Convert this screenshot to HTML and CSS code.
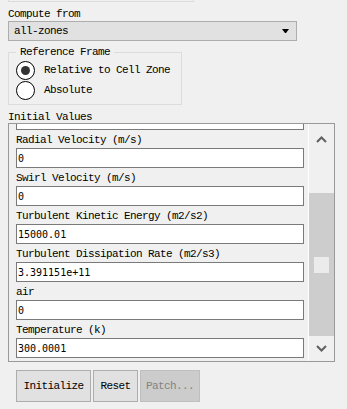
FILE: index.html
```html
<!DOCTYPE html>
<html lang="en">

<head>
  <meta charset="UTF-8">
  <meta name="viewport" content="width=device-width, initial-scale=1.0">
  <title>Initialization</title>
  <link rel="stylesheet" href="styles.css">
</head>

<body>

  <div class="panel">
    <div class="top-stub"></div>

    <label class="lbl compute-lbl" for="compute">Compute from</label>
    <div class="select" id="compute">
      <span>all-zones</span>
      <svg class="caret" width="8" height="5" viewBox="0 0 8 5"><polygon points="0,0 7,0 4,4 3,4" fill="#000"/></svg>
    </div>

    <fieldset class="group">
      <legend>Reference Frame</legend>
      <label class="radio"><span class="dot checked"></span>Relative to Cell Zone</label>
      <label class="radio"><span class="dot"></span>Absolute</label>
    </fieldset>

    <div class="lbl section-lbl">Initial Values</div>

    <div class="scroll-box">
      <div class="fields">
        <div class="stub"></div>

        <label class="field-lbl">Radial Velocity (m/s)</label>
        <input class="field" type="text" value="0">

        <label class="field-lbl">Swirl Velocity (m/s)</label>
        <input class="field" type="text" value="0">

        <label class="field-lbl">Turbulent Kinetic Energy (m2/s2)</label>
        <input class="field" type="text" value="15000.01">

        <label class="field-lbl">Turbulent Dissipation Rate (m2/s3)</label>
        <input class="field" type="text" value="3.391151e+11">

        <label class="field-lbl">air</label>
        <input class="field" type="text" value="0">

        <label class="field-lbl">Temperature (k)</label>
        <input class="field" type="text" value="300.0001">
      </div>

      <div class="scrollbar">
        <div class="sb-btn sb-up">
          <svg width="11" height="7" viewBox="0 0 11 7"><polyline points="1,6 5.5,1.5 10,6" fill="none" stroke="#606060" stroke-width="2"/></svg>
        </div>
        <div class="sb-track">
          <div class="sb-thumb"><span class="grip"></span></div>
        </div>
        <div class="sb-btn sb-down">
          <svg width="11" height="7" viewBox="0 0 11 7"><polyline points="1,1 5.5,5.5 10,1" fill="none" stroke="#606060" stroke-width="2"/></svg>
        </div>
      </div>
    </div>

    <div class="actions">
      <button class="btn btn-init">Initialize</button>
      <button class="btn btn-reset">Reset</button>
      <button class="btn btn-patch" disabled>Patch...</button>
    </div>
  </div>

</body>

</html>
```

FILE: styles.css
```css
body {
  margin: 0;
  background-color: #f0f0f0;
  font-family: "Liberation Mono", monospace;
  font-size: 11px;
  letter-spacing: -0.6px;
  color: #000;
}

.panel {
  padding: 0 8px;
}

.top-stub {
  width: 186px;
  height: 2px;
  box-sizing: border-box;
  border: 1px solid #dcdcdc;
  border-top: none;
}

.lbl {
  display: block;
  line-height: 13px;
}

.compute-lbl {
  height: 19px;
  box-sizing: border-box;
  padding-top: 6px;
}

.select {
  width: 289px;
  height: 20px;
  box-sizing: border-box;
  border: 1px solid #adadad;
  background: #e1e1e1;
  display: flex;
  align-items: center;
  justify-content: space-between;
  padding: 0 5px 0 5px;
}

.select span {
  line-height: 13px;
}

.caret {
  margin-right: 1px;
  margin-top: 1px;
}

.group {
  width: 174px;
  box-sizing: border-box;
  margin: 5px 0 0 0;
  padding: 2px 0 4px 7px;
  border: 1px solid #dcdcdc;
}

.group legend {
  padding: 0 4px;
  line-height: 12px;
}

.radio {
  display: flex;
  align-items: center;
  height: 20px;
  gap: 9px;
}

.dot {
  width: 19px;
  height: 19px;
  box-sizing: border-box;
  border: 1px solid #000;
  border-radius: 50%;
  background: #fff;
  display: flex;
  align-items: center;
  justify-content: center;
}

.dot.checked::after {
  content: "";
  width: 9px;
  height: 9px;
  border-radius: 50%;
  background: #333;
}

.section-lbl {
  margin-top: 6px;
  height: 12px;
  line-height: 12px;
}

.scroll-box {
  width: 327px;
  height: 239px;
  box-sizing: border-box;
  border: 1px solid #999;
  display: flex;
}

.fields {
  flex: 1;
  padding: 0 4px 0 7px;
  overflow: hidden;
}

.stub {
  height: 6px;
  box-sizing: border-box;
  border: 1px solid #7a7a7a;
  border-top: none;
  background: #fff;
}

.field-lbl {
  display: block;
  height: 18px;
  box-sizing: border-box;
  padding-top: 4px;
  line-height: 13px;
}

.field {
  display: block;
  width: 288px;
  height: 20px;
  box-sizing: border-box;
  margin: 0;
  border: 1px solid #7a7a7a;
  padding: 0 1px;
  background: #fff;
  font-family: "DejaVu Sans Mono", monospace;
  font-size: 10px;
  letter-spacing: 0;
  color: #000;
  outline: none;
}

.scrollbar {
  width: 26px;
  border-left: 1px solid #fff;
  box-sizing: border-box;
  background: #f0f0f0;
  display: flex;
  flex-direction: column;
}

.sb-btn {
  display: flex;
  justify-content: center;
}

.sb-up {
  height: 30px;
  align-items: center;
}

.sb-down {
  height: 25px;
  align-items: center;
}

.sb-track {
  flex: 1;
  padding-top: 39px;
}

.sb-thumb {
  height: 143px;
  background: #cdcdcd;
  display: flex;
  align-items: center;
  justify-content: center;
}

.grip {
  width: 15px;
  height: 16px;
  background: #ebebeb;
}

.actions {
  display: flex;
  gap: 2px;
  margin: 8px 0 0 8px;
}

.btn {
  height: 32px;
  box-sizing: border-box;
  border: 1px solid #adadad;
  background: #e1e1e1;
  font-family: "Liberation Mono", monospace;
  font-size: 11px;
  letter-spacing: -0.6px;
  color: #000;
  padding: 0;
}

.btn-init {
  width: 75px;
}

.btn-reset {
  width: 45px;
}

.btn-patch {
  width: 60px;
  background: #cccccc;
  border-color: #bfbfbf;
  color: #838383;
}
```
